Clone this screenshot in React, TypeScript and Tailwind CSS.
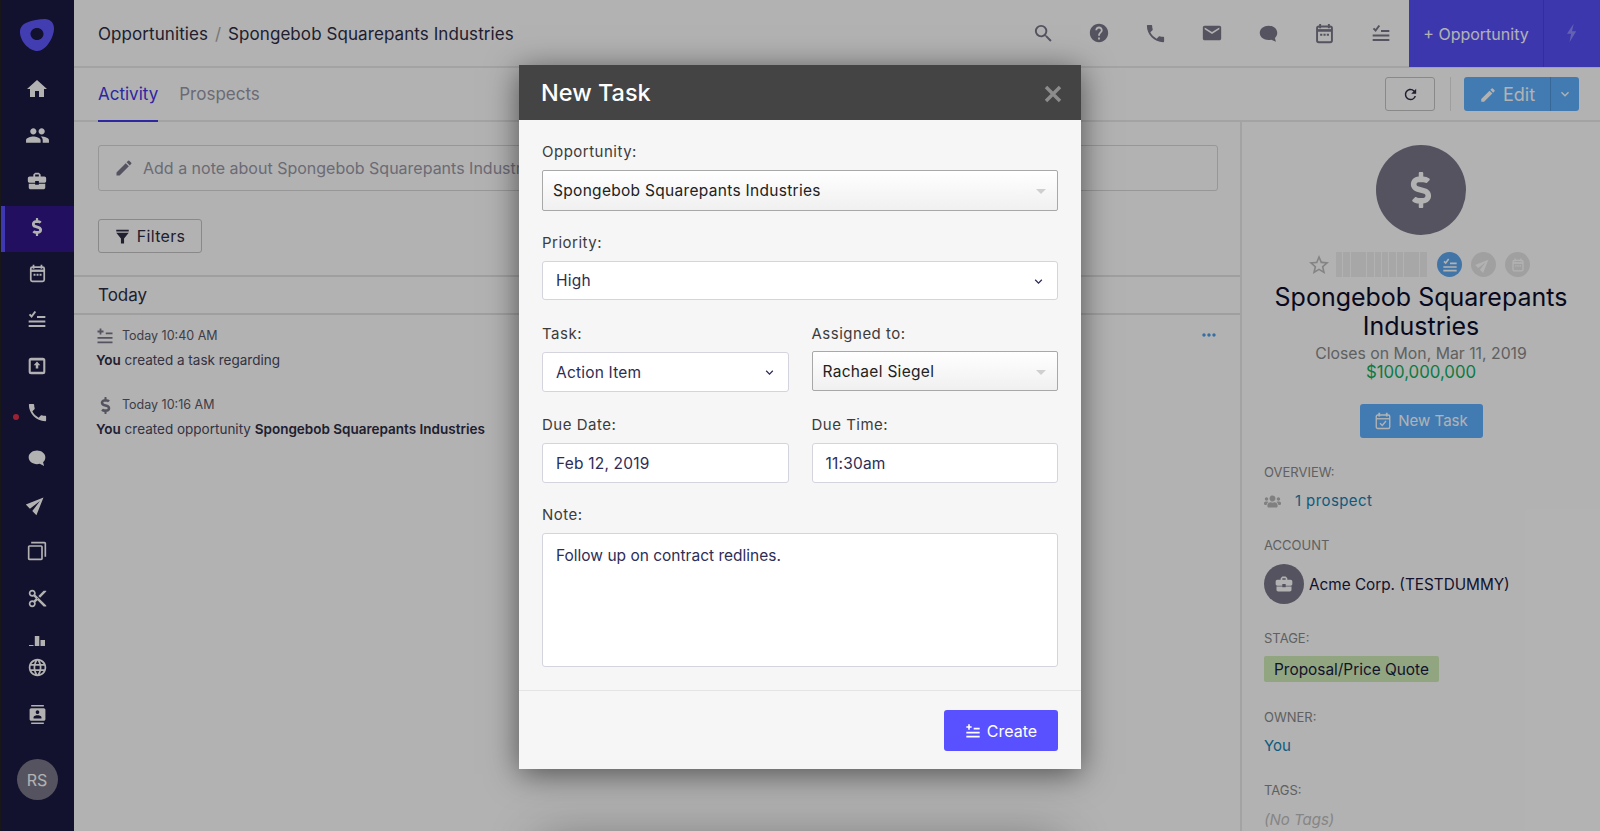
import type { ReactNode } from "react"
import {
  MdHome,
  MdPeople,
  MdBusinessCenter,
  MdPhone,
  MdSearch,
  MdHelp,
  MdEmail,
  MdSend,
  MdFilterNone,
  MdContentCut,
  MdLanguage,
  MdEdit,
  MdRefresh,
  MdKeyboardArrowDown,
  MdArrowDropDown,
  MdOutlineStarBorder,
  MdMoreHoriz,
  MdContacts,
} from "react-icons/md"
import { FaDollarSign, FaUsers } from "react-icons/fa"

function ChatIcon({ className }: { className?: string }) {
  return (
    <svg viewBox="0 0 24 24" className={className} fill="currentColor">
      <path d="M12 3c-5.300 0-10 3.300-10 8.200s4.500 8.200 10 8.200c1.200 0 2.200-.1 3.200-.4l5.300 2.500-1.200-4.300c1.600-1.400 2.700-3.300 2.700-6 0-4.900-4.700-8.200-10-8.200z" />
    </svg>
  )
}

function CalendarIcon({ className }: { className?: string }) {
  return (
    <svg viewBox="0 0 24 24" className={className} fill="none" stroke="currentColor">
      <path d="M7 1v5M17 1v5" strokeWidth="2.200" />
      <rect x="3.500" y="4" width="17" height="18" rx="2" strokeWidth="2.200" />
      <path d="M3.500 8.500h17" strokeWidth="3" />
      <path d="M7 13.500h2.500M10.800 13.500h2.500M14.600 13.500h2.500" strokeWidth="2.400" />
    </svg>
  )
}

function TasksIcon({ className }: { className?: string }) {
  return (
    <svg viewBox="0 0 24 24" className={className} fill="none" stroke="currentColor" strokeWidth="2.400">
      <path d="M3 6.500l2.500 2.500L10 3" />
      <path d="M12 9.500h10M2 15h20M2 20.500h20" />
    </svg>
  )
}

function AddTaskIcon({ className }: { className?: string }) {
  return (
    <svg viewBox="0 0 24 24" className={className} fill="none" stroke="currentColor" strokeWidth="2.400">
      <path d="M6 2v8M2 6h8M13 8.500h9M2 14.500h20M2 20.500h20" />
    </svg>
  )
}

function InboxUpIcon({ className }: { className?: string }) {
  return (
    <svg viewBox="0 0 24 24" className={className} fill="currentColor">
      <path
        d="M5 2h14a3 3 0 0 1 3 3v14a3 3 0 0 1-3 3H5a3 3 0 0 1-3-3V5a3 3 0 0 1 3-3zm-.500 3.500v13.500h15V5.500h-15zM12 6.500l4 4.500h-2.500v4h-3v-4H8l4-4.500z"
        fillRule="evenodd"
      />
    </svg>
  )
}

function BarsIcon({ className }: { className?: string }) {
  return (
    <svg viewBox="0 0 16 10" className={className} fill="currentColor">
      <path d="M0 9h4.500v1H0zM5.800 0h4.500v10H5.800zM11.500 4H16v6h-4.500z" />
    </svg>
  )
}

function BoltIcon({ className }: { className?: string }) {
  return (
    <svg viewBox="0 0 24 24" className={className} fill="currentColor">
      <path d="M14 1L6 13h5l-2 10 8-13h-5l2-9z" />
    </svg>
  )
}

function CalendarCheckIcon({ className }: { className?: string }) {
  return (
    <svg viewBox="0 0 24 24" className={className} fill="none" stroke="currentColor" strokeWidth="1.800">
      <path d="M7 1v5M17 1v5" strokeWidth="2.400" />
      <rect x="3" y="4" width="18" height="18" rx="2" />
      <path d="M3 9h18" />
      <path d="M8 15l3 3 5-6" />
    </svg>
  )
}

function FunnelIcon({ className }: { className?: string }) {
  return (
    <svg viewBox="0 0 24 24" className={className} fill="currentColor">
      <path d="M2 1h20v3H2zM2 6h20l-7.500 9v8h-5v-8z" />
    </svg>
  )
}

function CloseIcon({ className }: { className?: string }) {
  return (
    <svg viewBox="0 0 18 18" className={className} fill="none" stroke="currentColor" strokeWidth="3.400">
      <path d="M2 2l14 14M16 2L2 16" />
    </svg>
  )
}

function Logo() {
  return (
    <svg viewBox="0 0 34 32" className="h-[32px] w-[34px]" fill="#6058ff">
      <path
        fillRule="evenodd"
        d="M25 0c5 0 9 3.500 9 9.500C34 19 25.500 32 17.500 32 9 32 0 22 0 13 0 8.500 2.500 5 7 3.500 12 1.500 19 0 25 0zM17 9c-3.700 0-6.500 2.700-6.500 6s2.800 6 6.500 6 6.500-2.700 6.500-6-2.800-6-6.500-6z"
      />
    </svg>
  )
}

const navIcons: { icon: ReactNode; active?: boolean; dot?: boolean; gap?: string }[] = [
  { icon: <MdHome className="h-[24px] w-[24px]" /> },
  { icon: <MdPeople className="h-[25px] w-[25px]" /> },
  { icon: <MdBusinessCenter className="h-[22px] w-[22px]" /> },
  { icon: <FaDollarSign className="relative h-[18px] w-[18px]" />, active: true },
  { icon: <CalendarIcon className="h-[19px] w-[19px]" /> },
  { icon: <TasksIcon className="h-[20px] w-[20px]" /> },
  { icon: <InboxUpIcon className="h-[20px] w-[20px]" />, gap: "mt-[1px]" },
  { icon: <MdPhone className="h-[23px] w-[23px]" />, dot: true },
  { icon: <ChatIcon className="h-[20px] w-[20px]" /> },
  { icon: <MdSend className="h-[20px] w-[20px] -rotate-45" /> },
  { icon: <MdFilterNone className="h-[20px] w-[20px] rotate-180" />, gap: "mt-[1px]" },
  { icon: <MdContentCut className="h-[21px] w-[21px]" />, gap: "mt-[1px]" },
]

function Sidebar() {
  return (
    <aside className="flex h-full w-[74px] shrink-0 flex-col items-center border-l border-[#222] bg-[#1a1942] pr-[1px] text-white">
      <div className="mt-[19px] mb-[16px] flex h-[31px] items-start justify-center">
        <Logo />
      </div>
      {navIcons.map((item, i) => (
        <div key={i} className={`relative flex h-[46px] w-full items-center justify-center ${item.gap ?? ""}`}>
          {item.active && (
            <span className="absolute -right-[1px] left-0 top-[2px] h-[46px] border-l-4 border-[#5951ff] bg-[#331688]" />
          )}
          {item.dot && <span className="absolute left-[12px] top-[25px] h-[6px] w-[6px] rounded-full bg-[#e0304a]" />}
          <span className="relative">{item.icon}</span>
        </div>
      ))}
      <div className="mt-[15px] flex h-[10px] items-end">
        <BarsIcon className="h-[10px] w-[16px]" />
      </div>
      <div className="mt-[10px] flex h-[22px] items-center">
        <MdLanguage className="h-[21px] w-[21px]" />
      </div>
      <div className="mt-[25px] flex h-[22px] items-center">
        <MdContacts className="h-[19px] w-[19px]" />
      </div>
      <div className="mt-[34px] flex h-[41px] w-[41px] items-center justify-center rounded-full bg-[#7a7889] text-[16px] text-white">
        RS
      </div>
    </aside>
  )
}

function TopBar() {
  const icons = [
    <MdSearch key="s" className="h-[23px] w-[23px]" />,
    <MdHelp key="h" className="h-[22px] w-[22px]" />,
    <MdPhone key="p" className="h-[23px] w-[23px]" />,
    <MdEmail key="e" className="h-[22px] w-[22px]" />,
    <ChatIcon key="c" className="h-[21px] w-[21px]" />,
    <CalendarIcon key="ca" className="h-[21px] w-[21px]" />,
    <TasksIcon key="t" className="h-[20px] w-[20px]" />,
  ]
  return (
    <header className="flex h-[68px] shrink-0 items-center border-b-2 border-[#eaeaea] pl-[24px]">
      <div className="flex-1 pt-[3px] text-[17px] tracking-[0.08px] text-[#2e2d45]">
        Opportunities <span className="mx-[2px] text-[#aaa]">/</span> Spongebob Squarepants Industries
      </div>
      <div className="flex text-[#7a7889]">
        {icons.map((icon) => (
          <div key={icon.key} className="flex w-[56.300px] items-center justify-center">
            {icon}
          </div>
        ))}
      </div>
      <div className="flex h-[68px] w-[191px] items-center bg-[#5750f8] text-white">
        <div className="flex h-full w-[135px] items-center justify-center border-r border-[#4a43dc] pt-[2px] text-[16px]">
          + Opportunity
        </div>
        <div className="flex flex-1 items-center justify-center text-[#8f8cff]">
          <BoltIcon className="h-[20px] w-[20px]" />
        </div>
      </div>
    </header>
  )
}

function ActivityItem({ icon, time, children }: { icon: ReactNode; time: string; children: ReactNode }) {
  return (
    <div className="mb-[25px]">
      <div className="flex h-[20px] items-center gap-[8px] text-[12.500px] text-[#5a5968]">
        <span className="flex w-[18px] justify-center text-[#7a7889]">{icon}</span>
        {time}
      </div>
      <div className="mt-[4px] text-[13.500px] text-[#4a4960]">{children}</div>
    </div>
  )
}

function FieldLabel({ children }: { children: ReactNode }) {
  return <div className="text-[13px] leading-[18px] text-[#8a8a8a]">{children}</div>
}

function Sidepanel() {
  const stripes = [6, 7, 15, 7, 6, 6, 7, 6, 15, 7]
  return (
    <div className="flex w-[360px] shrink-0 flex-col items-center border-l-2 border-[#eaeaea] pt-[23px]">
      <div className="flex h-[90px] w-[90px] items-center justify-center rounded-full bg-[#7a7889] text-white">
        <FaDollarSign className="h-[36px] w-[36px]" />
      </div>
      <div className="mt-[17px] flex h-[25px] w-full items-center justify-center pr-[5px]">
        <MdOutlineStarBorder className="h-[24px] w-[24px] text-[#bdbdbd]" />
        <div className="ml-[5px] flex h-[25px] gap-[1px]">
          {stripes.map((w, i) => (
            <span key={i} className="h-full bg-[#efefef]" style={{ width: w }} />
          ))}
        </div>
        <div className="ml-[10px] flex h-[25px] w-[25px] items-center justify-center rounded-full bg-[#5fa8f0] text-white">
          <TasksIcon className="h-[16px] w-[16px]" />
        </div>
        <div className="ml-[9px] flex h-[25px] w-[25px] items-center justify-center rounded-full bg-[#e6e6e6] text-white">
          <MdSend className="h-[15px] w-[15px] -rotate-45" />
        </div>
        <div className="ml-[9px] flex h-[25px] w-[25px] items-center justify-center rounded-full bg-[#e6e6e6] text-white">
          <CalendarIcon className="h-[14px] w-[14px]" />
        </div>
      </div>
      <div className="mt-[6px] w-[320px] text-center text-[25px] leading-[29px] text-[#0e0e2c]">
        Spongebob Squarepants Industries
      </div>
      <div className="mt-[3px] text-[15.800px] leading-[20px] text-[#8a8a8a]">Closes on Mon, Mar 11, 2019</div>
      <div className="text-[16.800px] leading-[17px] text-[#10b060]">$100,000,000</div>
      <div className="mt-[23px] flex h-[34px] w-[123px] items-center justify-center gap-[6px] rounded-[3px] bg-[#5fb1ff] text-[15px] text-white">
        <CalendarCheckIcon className="h-[18px] w-[18px]" />
        New Task
      </div>
      <div className="mt-[25px] flex w-full flex-col pl-[22px] text-[15px]">
        <FieldLabel>OVERVIEW:</FieldLabel>
        <div className="mt-[10px] flex h-[20px] items-center tracking-[0.4px] text-[#1284b4]">
          <FaUsers className="h-[17px] w-[17px] text-[#b8b8b8]" />
          <span className="ml-[14px]">1 prospect</span>
        </div>
        <div className="mt-[25px]">
          <FieldLabel>ACCOUNT</FieldLabel>
        </div>
        <div className="mt-[10px] flex items-center gap-[5px] text-[15.300px] text-[#1a1942]">
          <div className="flex h-[40px] w-[40px] items-center justify-center rounded-full bg-[#7a7889] text-white">
            <MdBusinessCenter className="h-[20px] w-[20px]" />
          </div>
          <span className="pt-[2px]">Acme Corp. (TESTDUMMY)</span>
        </div>
        <div className="mt-[25px]">
          <FieldLabel>STAGE:</FieldLabel>
        </div>
        <div className="mt-[9px] flex h-[26px] w-[175px] items-center justify-center rounded-[2px] bg-[#d0edb8] pt-[1px] text-[15.400px] text-[#1a1942]">
          Proposal/Price Quote
        </div>
        <div className="mt-[26px]">
          <FieldLabel>OWNER:</FieldLabel>
        </div>
        <div className="mt-[9px] text-[#1284b4]">You</div>
        <div className="mt-[23px]">
          <FieldLabel>TAGS:</FieldLabel>
        </div>
        <div className="mt-[10px] italic text-[#c0c0c0]">(No Tags)</div>
      </div>
    </div>
  )
}

function Page() {
  return (
    <div className="flex min-w-0 flex-1 flex-col">
      <TopBar />
      <div className="flex h-[54px] shrink-0 items-stretch justify-between border-b-2 border-[#eaeaea] pl-[24px] pr-[21px]">
        <div className="flex gap-[21px] text-[17px]">
          <div className="-mb-[2px] flex items-center border-b-2 border-[#4138e6] pt-[2px] text-[#4138e6]">Activity</div>
          <div className="flex items-center pt-[2px] text-[#9a99a8]">Prospects</div>
        </div>
        <div className="flex items-center">
          <div className="flex h-[34px] w-[50px] items-center justify-center rounded-[3px] border border-[#c4c4c4] text-[#2e2d45]">
            <MdRefresh className="h-[17px] w-[17px]" />
          </div>
          <div className="ml-[15px] mr-[13px] h-[34px] w-px bg-[#e2e2e2]" />
          <div className="flex h-[34px] w-[115px] items-center rounded-[3px] bg-[#5fb1ff] text-[18px] text-white">
            <div className="flex h-full w-[87px] items-center justify-center gap-[6px] border-r border-[#4f96dc] pt-[1px]">
              <MdEdit className="h-[18px] w-[18px]" />
              Edit
            </div>
            <div className="flex flex-1 justify-center">
              <MdKeyboardArrowDown className="h-[16px] w-[16px]" />
            </div>
          </div>
        </div>
      </div>
      <div className="flex min-h-0 flex-1">
        <div className="relative min-w-0 flex-1">
          <div className="pl-[24px] pr-[22px] pt-[23px]">
            <div className="flex h-[46px] items-center gap-[9px] rounded-[3px] border border-[#d8d8d8] pl-[15px] text-[16px] text-[#9a99a8]">
              <MdEdit className="h-[20px] w-[20px] text-[#7a7889]" />
              Add a note about Spongebob Squarepants Industries
            </div>
            <div className="mt-[28px] flex h-[34px] w-[104px] items-center justify-center gap-[7px] rounded-[3px] border border-[#c4c4c4] text-[16px] tracking-[0.3px] text-[#2e2d45]">
              <FunnelIcon className="h-[15px] w-[15px]" />
              Filters
            </div>
          </div>
          <div className="mt-[22px] flex h-[40px] items-center border-y-2 border-[#e4e4e4] pl-[24px] pt-[2px] text-[17px] text-[#2e2d45]">
            Today
          </div>
          <div className="relative pl-[22px] pt-[11px]">
            <ActivityItem icon={<AddTaskIcon className="h-[18px] w-[18px]" />} time="Today 10:40 AM">
              <b className="font-semibold text-[#2e2d45]">You</b> created a task regarding
            </ActivityItem>
            <ActivityItem icon={<FaDollarSign className="h-[17px] w-[17px]" />} time="Today 10:16 AM">
              <b className="font-semibold text-[#2e2d45]">You</b> created opportunity{" "}
              <b className="font-semibold text-[#2e2d45]">Spongebob Squarepants Industries</b>
            </ActivityItem>
            <MdMoreHoriz className="absolute right-[21px] top-[10px] h-[20px] w-[20px] text-[#4f9fe8]" />
          </div>
        </div>
        <Sidepanel />
      </div>
    </div>
  )
}

const labelClass = "mb-[9px] text-[15px] leading-[18px] tracking-[0.5px] text-[#3c3c3c]"
const inputClass =
  "flex items-center justify-between rounded-[3px] border border-[#d4d4de] bg-white pl-[13px] pr-[11px] pt-[1px] text-[15.500px] tracking-[0.2px] text-[#2e2d55]"
const grayClass =
  "flex items-center justify-between rounded-[2px] border border-[#a8a8a8] bg-gradient-to-b from-white to-[#f0f0f0] pl-[10px] pr-[4px] pt-[1px] text-[15.500px] tracking-[0.3px] text-[#222]"

function Modal() {
  return (
    <div className="relative mt-[65px] h-[704px] w-[562px] bg-[#f6f6f6] shadow-[0_5px_30px_rgba(0,0,0,0.55)]">
      <div className="flex h-[55px] items-center justify-between bg-[#444444] pl-[22px] pr-[19px]">
        <span className="text-[23.500px] font-medium text-white">New Task</span>
        <CloseIcon className="mt-[2px] h-[18px] w-[18px] text-[#8c8c8c]" />
      </div>
      <div className="px-[23px] pt-[23px]">
        <div className={labelClass}>Opportunity:</div>
        <div className={`${grayClass} h-[41px]`}>
          Spongebob Squarepants Industries
          <MdArrowDropDown className="h-[24px] w-[24px] text-[#cfcfcf]" />
        </div>
        <div className={`${labelClass} mt-[23px]`}>Priority:</div>
        <div className={`${inputClass} h-[39px]`}>
          High
          <MdKeyboardArrowDown className="h-[15px] w-[15px]" />
        </div>
        <div className="mt-[25px] grid grid-cols-2 gap-x-[23px]">
          <div>
            <div className={labelClass}>Task:</div>
            <div className={`${inputClass} h-[40px]`}>
              Action Item
              <MdKeyboardArrowDown className="h-[15px] w-[15px]" />
            </div>
          </div>
          <div>
            <div className={labelClass}>Assigned to:</div>
            <div className={`${grayClass} -mt-px h-[40px]`}>
              Rachael Siegel
              <MdArrowDropDown className="h-[24px] w-[24px] text-[#cfcfcf]" />
            </div>
          </div>
        </div>
        <div className="mt-[24px] grid grid-cols-2 gap-x-[23px]">
          <div>
            <div className={labelClass}>Due Date:</div>
            <div className={`${inputClass} h-[40px]`}>Feb 12, 2019</div>
          </div>
          <div>
            <div className={labelClass}>Due Time:</div>
            <div className={`${inputClass} h-[40px]`}>11:30am</div>
          </div>
        </div>
        <div className={`${labelClass} mt-[23px]`}>Note:</div>
        <div className="h-[134px] rounded-[3px] border border-[#d4d4de] bg-white px-[13px] py-[12px] text-[15.500px] leading-[20px] text-[#2e2d55]">
          Follow up on contract redlines.
        </div>
      </div>
      <div className="mt-[23px] flex justify-end border-t border-[#e4e4e4] pr-[23px] pt-[19px]">
        <div className="flex h-[41px] w-[114px] items-center justify-center gap-[6px] rounded-[3px] bg-[#5951ff] text-[16px] text-white">
          <AddTaskIcon className="h-[16px] w-[16px]" />
          Create
        </div>
      </div>
    </div>
  )
}

export default function App() {
  return (
    <div className="relative flex h-[831px] w-[1600px] overflow-hidden bg-white font-['Inter','Liberation_Sans',sans-serif]">
      <Sidebar />
      <Page />
      <div className="absolute inset-0 flex justify-center bg-black/30">
        <div className="absolute left-[560px] top-[860px] h-[20px] w-[480px] shadow-[0_0_50px_20px_rgba(0,0,0,0.35)]" />
        <Modal />
      </div>
    </div>
  )
}
